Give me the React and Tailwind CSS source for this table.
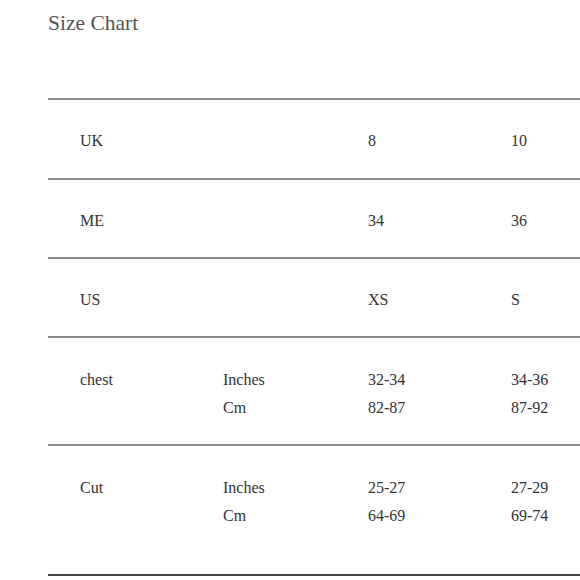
const rows = [
    { label: "UK", values: ["8", "10"], h: "h-[80px]" },
    { label: "ME", values: ["34", "36"], h: "h-[79px]" },
    { label: "US", values: ["XS", "S"], h: "h-[79px]" },
];

const measures = [
    { label: "chest", inches: ["32-34", "34-36"], cm: ["82-87", "87-92"], h: "h-[108px]", last: false },
    { label: "Cut", inches: ["25-27", "27-29"], cm: ["64-69", "69-74"], h: "h-[130px]", last: true },
];

const App = () => {
    return (
        <div className="w-[580px] h-[580px] overflow-hidden bg-white text-[#333] font-['Liberation_Serif',serif]">
            {/* Title */}
            <h1 className="h-[98px] pl-[48px] pt-[8px] text-[21.5px] leading-[30px] text-[#555]">Size Chart</h1>

            {/* Table */}
            <div className="ml-[48px] w-[560px] border-t-2 border-[#8a8a8a] text-[16px]">
                {rows.map((row) => (
                    <div
                        key={row.label}
                        className={`grid grid-cols-[175px_145px_143px_1fr] items-center ${row.h} pt-[4px] border-b-2 border-[#8a8a8a]`}
                    >
                        <div className="pl-[32px]">{row.label}</div>
                        <div></div>
                        <div>{row.values[0]}</div>
                        <div>{row.values[1]}</div>
                    </div>
                ))}

                {measures.map((m) => (
                    <div
                        key={m.label}
                        className={`grid grid-cols-[175px_145px_143px_1fr] items-start ${m.h} pt-[28px] leading-[28px] border-b-2 ${m.last ? "border-[#444]" : "border-[#8a8a8a]"}`}
                    >
                        <div className="pl-[32px]">{m.label}</div>
                        <div>
                            <div>Inches</div>
                            <div>Cm</div>
                        </div>
                        <div>
                            <div>{m.inches[0]}</div>
                            <div>{m.cm[0]}</div>
                        </div>
                        <div>
                            <div>{m.inches[1]}</div>
                            <div>{m.cm[1]}</div>
                        </div>
                    </div>
                ))}
            </div>
        </div>
    );
};

export default App;
